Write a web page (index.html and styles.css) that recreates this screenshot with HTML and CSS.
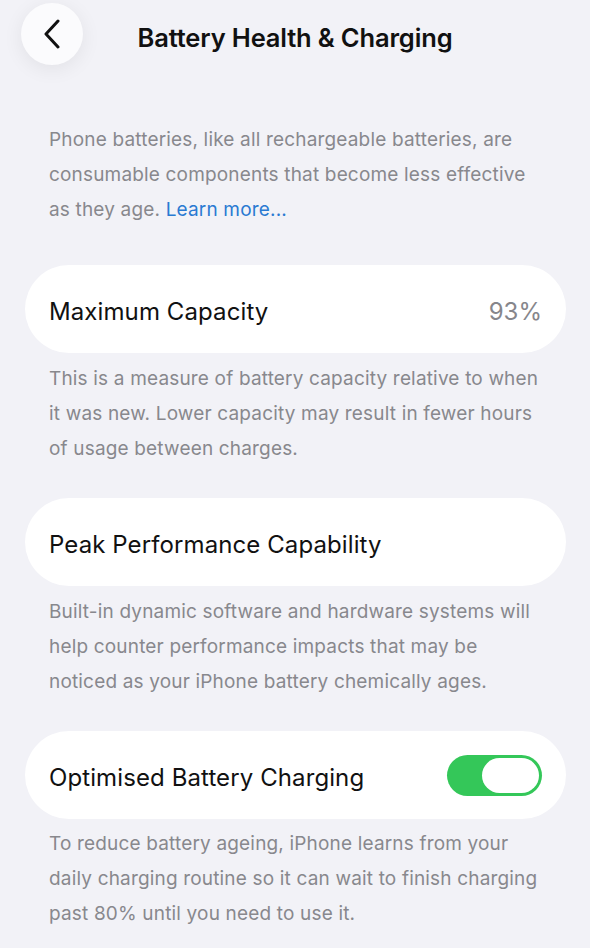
FILE: index.html
```html
<!DOCTYPE html>
<html lang="en">
<head>
    <meta charset="UTF-8">
    <meta name="viewport" content="width=device-width, initial-scale=1.0">
    <title>Battery Health &amp; Charging</title>
    <link rel="stylesheet" href="styles.css">
</head>
<body>

<div class="page">
    <div class="nav-bar">
        <button class="back-button" aria-label="Back">
            <svg width="18" height="30" viewBox="0 0 18 30">
                <path d="M15 2 L3 15 L15 28" fill="none" stroke="#111" stroke-width="3" stroke-linecap="round" stroke-linejoin="round"/>
            </svg>
        </button>
        <h1 class="nav-title">Battery Health &amp; Charging</h1>
    </div>

    <p class="intro">Phone batteries, like all rechargeable batteries, are consumable components that become less effective as they age. <a href="#" class="learn-more">Learn more...</a></p>

    <div class="row">
        <span class="row-label">Maximum Capacity</span>
        <span class="row-value">93%</span>
    </div>
    <p class="footnote">This is a measure of battery capacity relative to when it was new. Lower capacity may result in fewer hours of usage between charges.</p>

    <div class="row row-second">
        <span class="row-label">Peak Performance Capability</span>
    </div>
    <p class="footnote">Built-in dynamic software and hardware systems will help counter performance impacts that may be noticed as your iPhone battery chemically ages.</p>

    <div class="row row-third">
        <span class="row-label">Optimised Battery Charging</span>
        <span class="toggle on"><span class="knob"></span></span>
    </div>
    <p class="footnote footnote-last">To reduce battery ageing, iPhone learns from your daily charging routine so it can wait to finish charging past 80% until you need to use it.</p>
</div>

</body>
</html>
```

FILE: styles.css
```css
body {
    margin: 0;
    background-color: #f2f2f7;
    font-family: Inter, "Noto Sans", sans-serif;
    color: #111;
}

.page {
    width: 590px;
    height: 948px;
    overflow: hidden;
}

.nav-bar {
    position: relative;
    height: 68px;
    display: flex;
    align-items: center;
    justify-content: center;
}

.back-button {
    position: absolute;
    left: 21px;
    top: 3px;
    width: 62px;
    height: 62px;
    border: none;
    border-radius: 50%;
    background-color: #fbfbfd;
    box-shadow: 0 4px 20px rgba(0, 0, 0, 0.07);
    display: flex;
    align-items: center;
    justify-content: center;
    padding: 0;
}

.nav-title {
    margin: 0;
    padding-top: 6px;
    font-size: 25.5px;
    font-weight: 600;
    letter-spacing: -0.15px;
}

.intro,
.footnote {
    margin: 0;
    padding: 0 40px 0 49px;
    font-size: 19px;
    line-height: 35px;
    letter-spacing: 0.17px;
    color: #88888d;
}

.intro {
    margin-top: 54px;
    margin-bottom: 38px;
}

.learn-more {
    color: #2a7ad2;
    text-decoration: none;
}

.row {
    margin: 0 24px 0 25px;
    height: 88px;
    padding: 5px 24px 0;
    box-sizing: border-box;
    border-radius: 44px;
    background-color: #fff;
    display: flex;
    align-items: center;
    justify-content: space-between;
}

.footnote {
    margin-top: 8px;
}

.footnote-last {
    margin-top: 7px;
}

.row-second,
.row-third {
    margin-top: 32px;
}

.row-label {
    font-size: 24px;
    letter-spacing: 0.1px;
}

.row-value {
    font-size: 24px;
    color: #86868b;
}

.toggle {
    width: 95px;
    height: 41px;
    margin-top: -5px;
    border-radius: 21px;
    background-color: #34c759;
    display: flex;
    align-items: center;
    justify-content: flex-end;
    padding: 0 3px;
    box-sizing: border-box;
}

.knob {
    width: 57px;
    height: 35px;
    border-radius: 18px;
    background-color: #fff;
}
```
